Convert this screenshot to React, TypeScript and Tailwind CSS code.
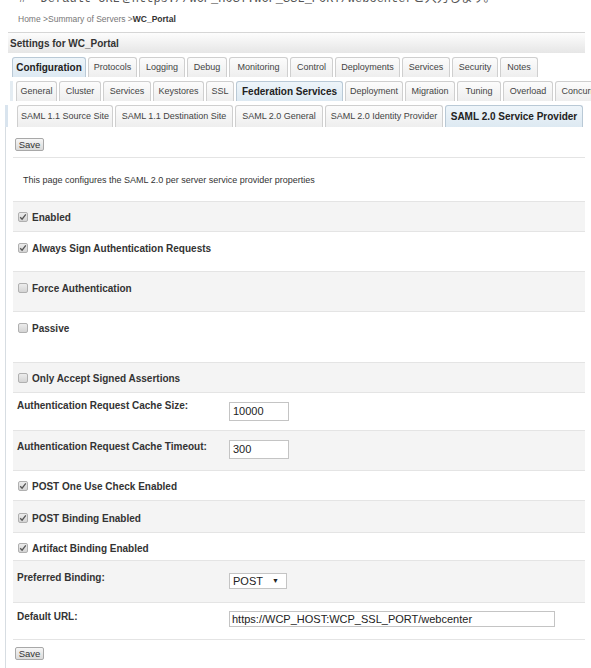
import React from "react";

type Tab = { label: string; w: string; active?: boolean };

const topTabs: Tab[] = [
  { label: "Configuration", w: "w-[74px]", active: true },
  { label: "Protocols", w: "w-[49px]" },
  { label: "Logging", w: "w-[46px]" },
  { label: "Debug", w: "w-[40px]" },
  { label: "Monitoring", w: "w-[59px]" },
  { label: "Control", w: "w-[43px]" },
  { label: "Deployments", w: "w-[65px]" },
  { label: "Services", w: "w-[48px]" },
  { label: "Security", w: "w-[46px]" },
  { label: "Notes", w: "w-[38px]" },
];

const midTabs: Tab[] = [
  { label: "General", w: "w-[41px]" },
  { label: "Cluster", w: "w-[42px]" },
  { label: "Services", w: "w-[48px]" },
  { label: "Keystores", w: "w-[51px]" },
  { label: "SSL", w: "w-[28px]" },
  { label: "Federation Services", w: "w-[107px]", active: true },
  { label: "Deployment", w: "w-[58px]" },
  { label: "Migration", w: "w-[50px]" },
  { label: "Tuning", w: "w-[44px]" },
  { label: "Overload", w: "w-[50px]" },
  { label: "Concurrency", w: "w-[64px]" },
];

const subTabs: Tab[] = [
  { label: "SAML 1.1 Source Site", w: "w-[96px]" },
  { label: "SAML 1.1 Destination Site", w: "w-[118px]" },
  { label: "SAML 2.0 General", w: "w-[88px]" },
  { label: "SAML 2.0 Identity Provider", w: "w-[118px]" },
  { label: "SAML 2.0 Service Provider", w: "w-[138px]", active: true },
];

function TabRow({ tabs, h, pl }: { tabs: Tab[]; h: string; pl: string }) {
  return (
    <div className={`flex gap-[2px] overflow-hidden ${h} ${pl}`}>
      {tabs.map((t) => (
        <div
          key={t.label}
          className={`${t.w} shrink-0 flex items-center justify-center whitespace-nowrap rounded-t-[3px] border border-b-0 ${
            t.active
              ? "border-[#b9c9d6] bg-gradient-to-b from-[#eef5fa] to-[#dde9f2] text-[10px] font-bold text-[#222]"
              : "border-[#cfcfcf] bg-gradient-to-b from-[#fcfcfc] to-[#eeeeee] text-[9px] text-[#444]"
          }`}
        >
          {t.label}
        </div>
      ))}
    </div>
  );
}

function Check({ on }: { on: boolean }) {
  return (
    <span className="w-[10px] h-[10px] shrink-0 rounded-[2px] border border-[#b0b0b0] bg-gradient-to-b from-[#ececec] to-[#d4d4d4] flex items-center justify-center">
      {on && (
        <svg width="8" height="8" viewBox="0 0 8 8">
          <path d="M1.2 4.2 L3.1 6.2 L6.8 1.4" fill="none" stroke="#555" strokeWidth="1.3" />
        </svg>
      )}
    </span>
  );
}

function CheckRow({ label, on, h, pt, gray }: { label: string; on: boolean; h: string; pt: string; gray?: boolean }) {
  return (
    <div className={`${h} ${pt} pl-[5px] border-t border-[#e4e4e4] ${gray ? "bg-[#f4f4f4]" : "bg-white"}`}>
      <div className="flex items-center gap-[4px] h-[12px]">
        <Check on={on} />
        <span className="text-[10px] font-bold text-[#333]">{label}</span>
      </div>
    </div>
  );
}

function FieldRow({
  label,
  h,
  pt,
  gray,
  children,
}: {
  label: string;
  h: string;
  pt: string;
  gray?: boolean;
  children: React.ReactNode;
}) {
  return (
    <div className={`${h} flex items-start pl-[4px] border-t border-[#e4e4e4] ${gray ? "bg-[#f4f4f4]" : "bg-white"}`}>
      <div className={`w-[212px] ${pt} h-[12px] leading-[12px] text-[10px] font-bold text-[#333]`}>{label}</div>
      {children}
    </div>
  );
}

function SaveButton() {
  return (
    <div className="w-[29px] h-[13px] ml-[2px] border border-[#a8a8a8] rounded-[2px] bg-gradient-to-b from-[#f6f6f6] to-[#dadada] text-[9.5px] leading-[11px] text-center text-[#333]">
      Save
    </div>
  );
}

export default function App() {
  return (
    <div className="w-[591px] h-[668px] overflow-hidden bg-white font-['Liberation_Sans',Arial,sans-serif] text-[#333]">
      {/* cut-off caption line */}
      <div className="h-[10px] overflow-hidden">
        <div className="-mt-[9px] pl-[19px] whitespace-nowrap font-['Liberation_Mono','Noto_Sans_CJK_JP',monospace] text-[12px] leading-[16px] text-[#555]">
          #&nbsp;&nbsp;Default URLをhttps://WCP_HOST:WCP_SSL_PORT/webcenterと入力します。
        </div>
      </div>

      {/* breadcrumb */}
      <div className="h-[18px] flex items-center pl-[18px] text-[8.5px] text-[#777]">
        Home &gt;Summary of Servers &gt;<span className="font-bold text-[#333]">WC_Portal</span>
      </div>

      {/* settings header */}
      <div className="mt-[4px] ml-[8px] mr-[6px] h-[21px] flex items-center pl-[2px] border-t border-[#d6d6d6] bg-gradient-to-b from-[#fdfdfd] to-[#e6e6e6] text-[10px] font-bold text-[#333]">
        Settings for WC_Portal
      </div>

      <div className="mt-[4px]">
        <TabRow tabs={topTabs} h="h-[20px]" pl="pl-[12px]" />
      </div>
      <div className="mt-[4px] border-l-[3px] border-[#e4ecf2] ml-[10px]">
        <TabRow tabs={midTabs} h="h-[20px]" pl="pl-[3px]" />
      </div>
      <div className="mt-[4px] border-l-[3px] border-[#d9e4ee] ml-[5px]">
        <TabRow tabs={subTabs} h="h-[22px]" pl="pl-[9px]" />
      </div>

      {/* content panel */}
      <div className="ml-[5px] border-l border-[#d7dde2] pl-[7px] pr-[6px] h-[541px]">
        <div className="pt-[11px] h-[30px]">
          <SaveButton />
        </div>
        <div className="h-[44px] border-t border-[#e4e4e4] pt-[16px] pl-[10px] text-[9px] leading-[12px] text-[#333]">
          This page configures the SAML 2.0 per server service provider properties
        </div>

        <CheckRow label="Enabled" on h="h-[30px]" pt="pt-[9px]" gray />
        <CheckRow label="Always Sign Authentication Requests" on h="h-[40px]" pt="pt-[10px]" />
        <CheckRow label="Force Authentication" on={false} h="h-[40px]" pt="pt-[10px]" gray />
        <CheckRow label="Passive" on={false} h="h-[51px]" pt="pt-[10px]" />
        <CheckRow label="Only Accept Signed Assertions" on={false} h="h-[30px]" pt="pt-[9px]" gray />

        <FieldRow label="Authentication Request Cache Size:" h="h-[38px]" pt="mt-[7px]">
          <div className="mt-[9px] w-[60px] h-[19px] border border-[#c4c4c4] bg-white pl-[3px] text-[11px] leading-[17px] text-[#222]">
            10000
          </div>
        </FieldRow>
        <FieldRow label="Authentication Request Cache Timeout:" h="h-[40px]" pt="mt-[10px]" gray>
          <div className="mt-[9px] w-[60px] h-[19px] border border-[#c4c4c4] bg-white pl-[3px] text-[11px] leading-[17px] text-[#222]">
            300
          </div>
        </FieldRow>

        <CheckRow label="POST One Use Check Enabled" on h="h-[30px]" pt="pt-[9px]" />
        <CheckRow label="POST Binding Enabled" on h="h-[32px]" pt="pt-[11px]" gray />
        <CheckRow label="Artifact Binding Enabled" on h="h-[28px]" pt="pt-[9px]" />

        <FieldRow label="Preferred Binding:" h="h-[42px]" pt="mt-[11px]" gray>
          <div className="mt-[12px] w-[58px] h-[16px] border border-[#c4c4c4] bg-white pl-[3px] flex items-center gap-[9px] text-[11px] text-[#222]">
            POST
            <span className="text-[7px] text-[#222]">▼</span>
          </div>
        </FieldRow>
        <FieldRow label="Default URL:" h="h-[37px]" pt="mt-[8px]">
          <div className="mt-[8px] w-[326px] h-[16px] border border-[#c4c4c4] bg-white pl-[2px] text-[11px] leading-[14px] text-[#222] whitespace-nowrap">
            https://WCP_HOST:WCP_SSL_PORT/webcenter
          </div>
        </FieldRow>

        <div className="border-t border-[#e4e4e4] pt-[7px]">
          <SaveButton />
        </div>
      </div>
    </div>
  );
}
